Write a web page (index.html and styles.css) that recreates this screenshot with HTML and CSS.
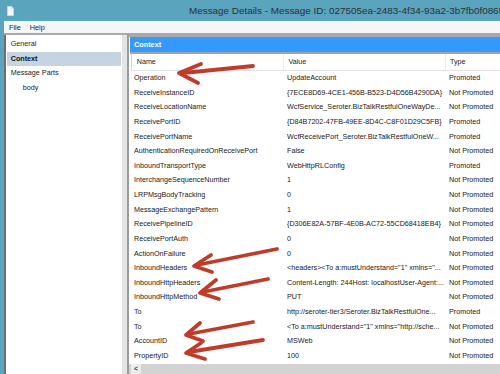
FILE: index.html
```html
<!DOCTYPE html>
<html>
<head>
<meta charset="utf-8">
<link rel="stylesheet" href="styles.css">
</head>
<body>
<div class="window">
  <div class="titlebar">
    <svg class="appicon" viewBox="0 0 7 10" width="7" height="10"><path d="M0.5 0.5H4.6L6.5 2.4V9.5H0.5Z" fill="#f4f6f8" stroke="#d9e3ea" stroke-width="0.6"/><path d="M4.6 0.5V2.4H6.5" fill="#dfe6ec" stroke="#c9d4dc" stroke-width="0.5"/></svg>
    <span class="title">Message Details - Message ID: 027505ea-2483-4f34-93a2-3b7fb0f08659</span>
  </div>
  <div class="frame">
    <div class="menubar"><span>File</span><span>Help</span></div>
    <div class="sep"></div>
    <div class="main">
      <div class="nav">
        <div class="nav-item">General</div>
        <div class="nav-item sel">Context</div>
        <div class="nav-item">Message Parts</div>
        <div class="nav-item child">body</div>
      </div>
      <div class="splitter"></div>
      <div class="content">
        <div class="ctx-title">Context</div>
        <div class="grid-head"><div>Name</div><div>Value</div><div>Type</div></div>
        <div class="rows">
          <div class="row"><div>Operation</div><div>UpdateAccount</div><div>Promoted</div></div>
          <div class="row"><div>ReceiveInstanceID</div><div>{7ECE8D69-4CE1-456B-B523-D4D56B4290DA}</div><div>Not Promoted</div></div>
          <div class="row"><div>ReceiveLocationName</div><div>WcfService_Seroter.BizTalkRestfulOneWayDe...</div><div>Not Promoted</div></div>
          <div class="row"><div>ReceivePortID</div><div>{D84B7202-47FB-49EE-8D4C-C8F01D29C5FB}</div><div>Promoted</div></div>
          <div class="row"><div>ReceivePortName</div><div>WcfReceivePort_Seroter.BizTalkRestfulOneW...</div><div>Promoted</div></div>
          <div class="row"><div>AuthenticationRequiredOnReceivePort</div><div>False</div><div>Not Promoted</div></div>
          <div class="row"><div>InboundTransportType</div><div>WebHttpRLConfig</div><div>Promoted</div></div>
          <div class="row"><div>InterchangeSequenceNumber</div><div>1</div><div>Not Promoted</div></div>
          <div class="row"><div>LRPMsgBodyTracking</div><div>0</div><div>Not Promoted</div></div>
          <div class="row"><div>MessageExchangePattern</div><div>1</div><div>Not Promoted</div></div>
          <div class="row"><div>ReceivePipelineID</div><div>{D306E82A-57BF-4E0B-AC72-55CD68418EB4}</div><div>Not Promoted</div></div>
          <div class="row"><div>ReceivePortAuth</div><div>0</div><div>Not Promoted</div></div>
          <div class="row"><div>ActionOnFailure</div><div>0</div><div>Not Promoted</div></div>
          <div class="row"><div>InboundHeaders</div><div>&lt;headers&gt;&lt;To a:mustUnderstand="1" xmlns="...</div><div>Not Promoted</div></div>
          <div class="row"><div>InboundHttpHeaders</div><div>Content-Length: 244Host: localhostUser-Agent:...</div><div>Not Promoted</div></div>
          <div class="row"><div>InboundHttpMethod</div><div>PUT</div><div>Not Promoted</div></div>
          <div class="row"><div>To</div><div>http://seroter-tier3/Seroter.BizTalkRestfulOne...</div><div>Promoted</div></div>
          <div class="row"><div>To</div><div>&lt;To a:mustUnderstand="1" xmlns="http://sche...</div><div>Not Promoted</div></div>
          <div class="row"><div>AccountID</div><div>MSWeb</div><div>Not Promoted</div></div>
          <div class="row"><div>PropertyID</div><div>100</div><div>Not Promoted</div></div>
        </div>
        <div class="hscroll"><span class="sbtn">&lt;</span></div>
      </div>
    </div>
  </div>
  <svg class="annotations" viewBox="0 0 500 374" width="500" height="374">
    <g fill="none" stroke="#c03c2a" stroke-width="3.8" stroke-linecap="round" stroke-linejoin="round">
      <path d="M183 73 L253 66"/>
      <path d="M201 64 L179 73 L198 83"/>
      <path d="M197 265 L277 249"/>
      <path d="M211 255 L194 266 L212 272"/>
      <path d="M203 292 L268 279"/>
      <path d="M216 280 L200 293 L219 299"/>
      <path d="M189 334 L253 322"/>
      <path d="M200 323 L186 335 L203 341"/>
      <path d="M189 352 L263 340"/>
      <path d="M201 343 L186 353 L205 359"/>
    </g>
  </svg>
</div>
</body>
</html>
```
FILE: styles.css
```css
html, body {
  margin: 0;
  padding: 0;
}
body {
  width: 500px;
  height: 374px;
  overflow: hidden;
  font-family: "Liberation Sans", Arial, sans-serif;
  color: #1f1f1f;
}
.window {
  position: relative;
  width: 500px;
  height: 374px;
  background: #5aa4bd;
  display: flex;
  flex-direction: column;
}
.titlebar {
  height: 21px;
  flex: none;
  display: flex;
  align-items: center;
  padding-left: 7px;
  overflow: hidden;
}
.appicon {
  flex: none;
  display: block;
}
.title {
  margin-left: 175px;
  font-size: 9.9px;
  color: #2c3033;
  white-space: nowrap;
}
.frame {
  flex: 1;
  min-height: 0;
  display: flex;
  flex-direction: column;
  padding-left: 4px;
}
.menubar {
  height: 12px;
  flex: none;
  background: #f5f6f7;
  display: flex;
  align-items: center;
  gap: 9px;
  padding-left: 5px;
  font-size: 7.3px;
  color: #1e1e1e;
}
.sep {
  height: 2px;
  flex: none;
  background: #a9a9a9;
}
.main {
  flex: 1;
  min-height: 0;
  display: flex;
}
.nav {
  width: 116px;
  flex: none;
  border-left: 2px solid #6f6f6f;
  background: #ffffff;
  padding-top: 2px;
  font-size: 7.2px;
  color: #222;
}
.nav-item {
  height: 14.6px;
  line-height: 14.6px;
  margin: 0 1px;
  padding-left: 3.7px;
  white-space: nowrap;
}
.nav-item.sel {
  background: #c6d4e2;
  font-weight: bold;
  color: #111;
}
.nav-item.child {
  padding-left: 15.7px;
}
.splitter {
  width: 5px;
  flex: none;
  background: #e4e4e4;
  border-right: 2px solid #9b9b9b;
}
.content {
  flex: 1;
  min-width: 0;
  display: flex;
  flex-direction: column;
  background: #ffffff;
  border-top: 2px solid #a9a9a9;
}
.ctx-title {
  height: 15px;
  flex: none;
  line-height: 15px;
  background: #3399ff;
  color: #ffffff;
  font-weight: bold;
  font-size: 7.3px;
  padding-left: 4px;
  margin-left: 1px;
  border-bottom: 2px solid #a3a3a3;
}
.grid-head {
  height: 16px;
  flex: none;
  display: grid;
  grid-template-columns: 152px 162px 1fr;
  margin-left: 2px;
  border-left: 1px solid #d6d6d6;
  border-bottom: 1px solid #e3e3e3;
  font-size: 7.2px;
  line-height: 16px;
  color: #222;
}
.grid-head > div {
  padding-left: 4.7px;
  white-space: nowrap;
  border-right: 1px solid #ececec;
}
.grid-head > div:last-child {
  border-right: none;
  padding-left: 4px;
}
.grid-head > div:nth-child(2) {
  padding-left: 4.5px;
}
.rows {
  flex: 1;
  min-height: 0;
  overflow: hidden;
}
.row {
  display: grid;
  grid-template-columns: 154px 162px 1fr;
  height: 14.63px;
  line-height: 14.63px;
  font-size: 7.2px;
  color: #202020;
}
.row > div {
  padding-left: 5px;
  white-space: nowrap;
  overflow: hidden;
}
.row > div:nth-child(2),
.row > div:nth-child(3) {
  padding-left: 4px;
}
.hscroll {
  height: 10.4px;
  flex: none;
  background: #d3d3d3;
  display: flex;
}
.sbtn {
  width: 10px;
  margin-left: 2px;
  background: #ededed;
  font-size: 7px;
  line-height: 10.4px;
  text-align: center;
  color: #444;
  font-weight: bold;
}
.annotations {
  position: absolute;
  top: 0;
  left: 0;
  pointer-events: none;
}
```
